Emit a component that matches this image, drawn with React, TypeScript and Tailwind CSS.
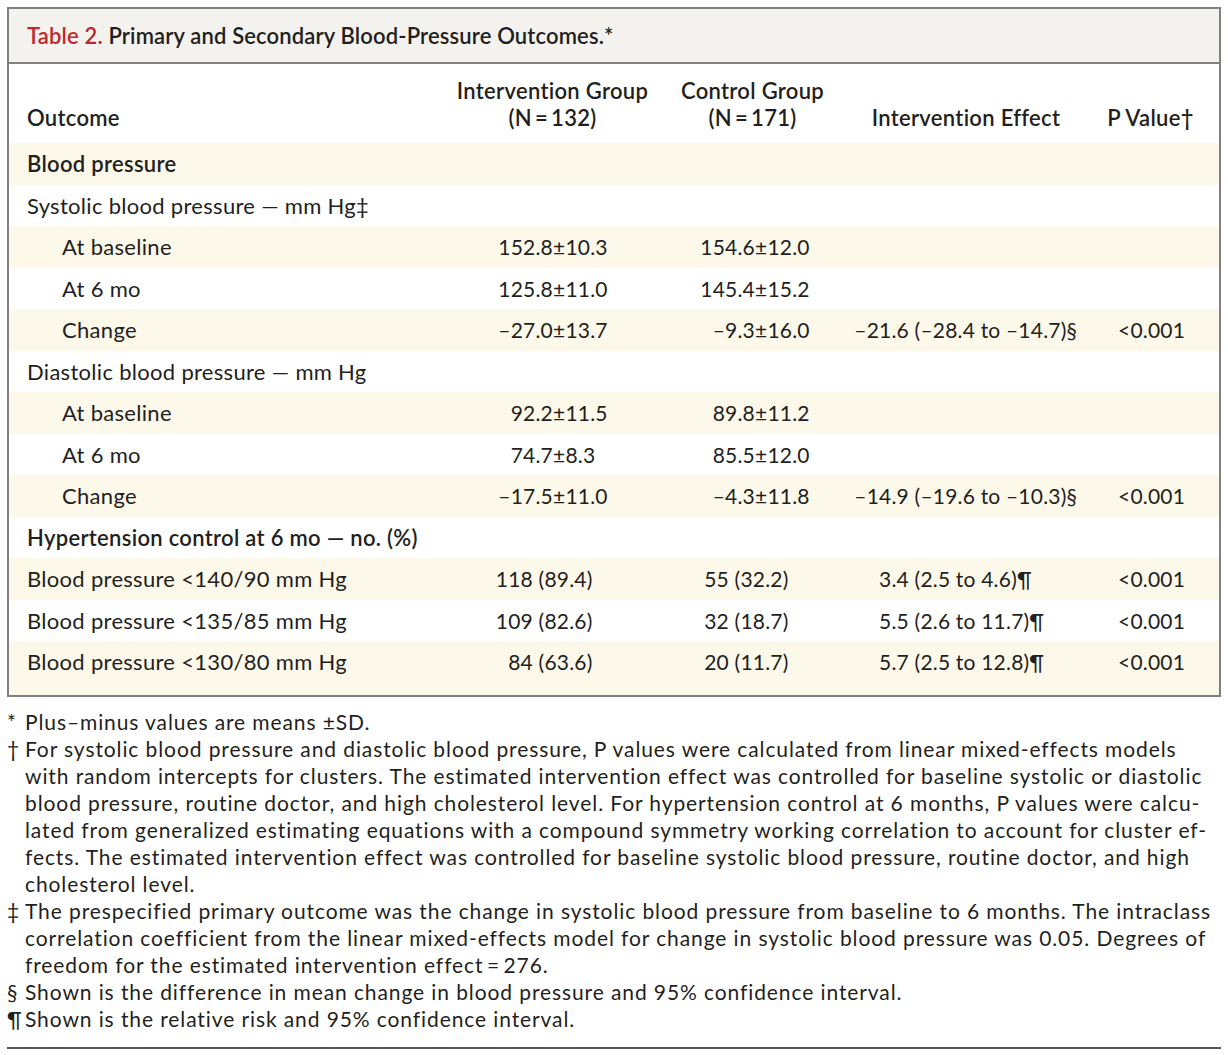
import React from "react";

type Cell = [string, string];
type Row = {
  label: string;
  kind: "section" | "sub" | "item" | "plain";
  shade: boolean;
  a?: Cell;
  b?: Cell;
  e?: Cell;
  p?: string;
  ap?: boolean;
};

const rows: Row[] = [
  { label: "Blood pressure", kind: "section", shade: true },
  { label: "Systolic blood pressure — mm Hg‡", kind: "plain", shade: false },
  { label: "At baseline", kind: "sub", shade: true, a: ["152.8", "±10.3"], b: ["154.6", "±12.0"] },
  { label: "At 6 mo", kind: "sub", shade: false, a: ["125.8", "±11.0"], b: ["145.4", "±15.2"] },
  { label: "Change", kind: "sub", shade: true, a: ["–27.0", "±13.7"], b: ["–9.3", "±16.0"], e: ["–21.6", " (–28.4 to –14.7)§"], p: "<0.001" },
  { label: "Diastolic blood pressure — mm Hg", kind: "plain", shade: false },
  { label: "At baseline", kind: "sub", shade: true, a: ["92.2", "±11.5"], b: ["89.8", "±11.2"] },
  { label: "At 6 mo", kind: "sub", shade: false, a: ["74.7", "±8.3"], b: ["85.5", "±12.0"] },
  { label: "Change", kind: "sub", shade: true, a: ["–17.5", "±11.0"], b: ["–4.3", "±11.8"], e: ["–14.9", " (–19.6 to –10.3)§"], p: "<0.001" },
  { label: "Hypertension control at 6 mo — no. (%)", kind: "section", shade: false },
  { label: "Blood pressure <140/90 mm Hg", kind: "plain", shade: true, ap: true, a: ["118", " (89.4)"], b: ["55", " (32.2)"], e: ["3.4", " (2.5 to 4.6)¶"], p: "<0.001" },
  { label: "Blood pressure <135/85 mm Hg", kind: "plain", shade: false, ap: true, a: ["109", " (82.6)"], b: ["32", " (18.7)"], e: ["5.5", " (2.6 to 11.7)¶"], p: "<0.001" },
  { label: "Blood pressure <130/80 mm Hg", kind: "plain", shade: true, ap: true, a: ["84", " (63.6)"], b: ["20", " (11.7)"], e: ["5.7", " (2.5 to 12.8)¶"], p: "<0.001" },
];

function Aligned({ cell, w }: { cell?: Cell; w: string }) {
  if (!cell) return <div />;
  return (
    <div className="flex items-center whitespace-pre">
      <span className={`${w} text-right`}>{cell[0]}</span>
      <span>{cell[1]}</span>
    </div>
  );
}

const foot: { m: string; lines: string[] }[] = [
  { m: "*", lines: ["Plus–minus values are means ±SD."] },
  {
    m: "†",
    lines: [
      "For systolic blood pressure and diastolic blood pressure, P values were calculated from linear mixed-effects models",
      "with random intercepts for clusters. The estimated intervention effect was controlled for baseline systolic or diastolic",
      "blood pressure, routine doctor, and high cholesterol level. For hypertension control at 6 months, P values were calcu-",
      "lated from generalized estimating equations with a compound symmetry working correlation to account for cluster ef-",
      "fects. The estimated intervention effect was controlled for baseline systolic blood pressure, routine doctor, and high",
      "cholesterol level.",
    ],
  },
  {
    m: "‡",
    lines: [
      "The prespecified primary outcome was the change in systolic blood pressure from baseline to 6 months. The intraclass",
      "correlation coefficient from the linear mixed-effects model for change in systolic blood pressure was 0.05. Degrees of",
      "freedom for the estimated intervention effect\u2009=\u2009276.",
    ],
  },
  { m: "§", lines: ["Shown is the difference in mean change in blood pressure and 95% confidence interval."] },
  { m: "¶", lines: ["Shown is the relative risk and 95% confidence interval."] },
];

const cols = "grid grid-cols-[441px_205px_195px_232px_137px]";

export default function App() {
  return (
    <div
      className="w-[1228px] h-[1055px] bg-white text-[#231f20] overflow-hidden"
      style={{ fontFamily: "Lato, 'Open Sans', sans-serif" }}
    >
      <div className="mx-[7px] mt-[7px] border-2 border-[#808080]">
        <div className="h-[55px] bg-[#f4f2ee] border-b-2 border-[#808080] flex items-center pl-[18px] text-[22px] tracking-[0.15px] font-semibold">
          <span className="text-[#c1272d]">Table 2.</span>
          <span>&nbsp;Primary and Secondary Blood-Pressure Outcomes.*</span>
        </div>
        <div className={`${cols} h-[79px] text-[22px] tracking-[0.3px] font-semibold leading-[27px] items-end pb-[12px]`}>
          <div className="pl-[18px]">Outcome</div>
          <div className="text-center">
            Intervention Group
            <br />
            (N{"\u2009=\u2009"}132)
          </div>
          <div className="text-center">
            Control Group
            <br />
            (N{"\u2009=\u2009"}171)
          </div>
          <div className="text-center">Intervention Effect</div>
          <div className="text-center">P Value†</div>
        </div>
        {rows.map((r, i) => {
          const last = i === rows.length - 1;
          return (
            <div
              key={i}
              className={`${cols} ${r.shade ? "bg-[#fcf8ea]" : "bg-white"} ${last ? "pb-[12px]" : ""}`}
            >
              <div
                className={`h-[41.5px] flex items-center whitespace-nowrap text-[22px] tracking-[0.3px] ${
                  r.kind === "sub" ? "pl-[53px]" : "pl-[18px]"
                } ${r.kind === "section" ? "font-semibold" : ""}`}
              >
                {r.label}
              </div>
              <div className="h-[41.5px] flex items-center text-[21px] tracking-[0.2px]">
                <Aligned cell={r.a} w={r.ap ? "w-[83px]" : "w-[103px]"} />
              </div>
              <div className="h-[41.5px] flex items-center text-[21px] tracking-[0.2px]">
                <Aligned cell={r.b} w={r.ap ? "w-[74px]" : "w-[100px]"} />
              </div>
              <div className="h-[41.5px] flex items-center text-[21px] tracking-[0.2px]">
                <Aligned cell={r.e} w="w-[59px]" />
              </div>
              <div className="h-[41.5px] flex items-center pl-[36px] text-[21px] tracking-[0.2px]">{r.p}</div>
            </div>
          );
        })}
      </div>
      <div className="mt-[11px] text-[21px] tracking-[0.9px] leading-[27px]">
        {foot.map((f, i) => (
          <div key={i} className="flex">
            <div className="w-[25px] pl-[7px] shrink-0">{f.m}</div>
            <div>
              {f.lines.map((l, j) => (
                <div key={j} className="whitespace-nowrap">
                  {l}
                </div>
              ))}
            </div>
          </div>
        ))}
      </div>
      <div className="mx-[7px] mt-[15px] h-[2px] bg-[#555]" />
    </div>
  );
}
